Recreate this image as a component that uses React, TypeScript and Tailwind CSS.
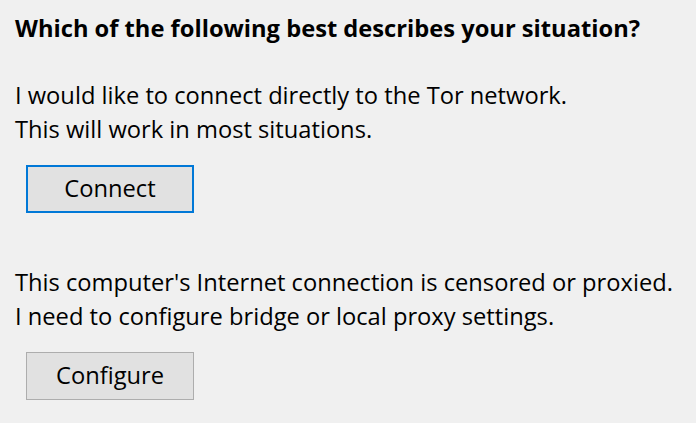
import React from "react";

export default function App() {
  return (
    <div
      className="w-[696px] h-[423px] bg-[#f0f0f0] text-black pl-[15px] pt-[12px] flex flex-col items-start overflow-hidden"
      style={{ fontFamily: '"Open Sans", "Noto Sans", sans-serif' }}
    >
      <h1 className="text-[23.7px] font-bold leading-[32px] m-0 whitespace-nowrap">
        Which of the following best describes your situation?
      </h1>
      <p className="text-[23.7px] leading-[34px] mt-[34px] whitespace-nowrap">
        I would like to connect directly to the Tor network.
        <br />
        This will work in most situations.
      </p>
      <button className="ml-[11px] mt-[19px] w-[168px] h-[48px] bg-[#e1e1e1] border-2 border-[#0078d7] text-[23.7px] leading-none flex items-center justify-center">
        Connect
      </button>
      <p className="text-[23.7px] leading-[34px] mt-[52px] whitespace-nowrap">
        This computer's Internet connection is censored or proxied.
        <br />
        I need to configure bridge or local proxy settings.
      </p>
      <button className="ml-[11px] mt-[19px] w-[168px] h-[48px] bg-[#e1e1e1] border border-[#adadad] text-[23.7px] leading-none flex items-center justify-center">
        Configure
      </button>
    </div>
  );
}
